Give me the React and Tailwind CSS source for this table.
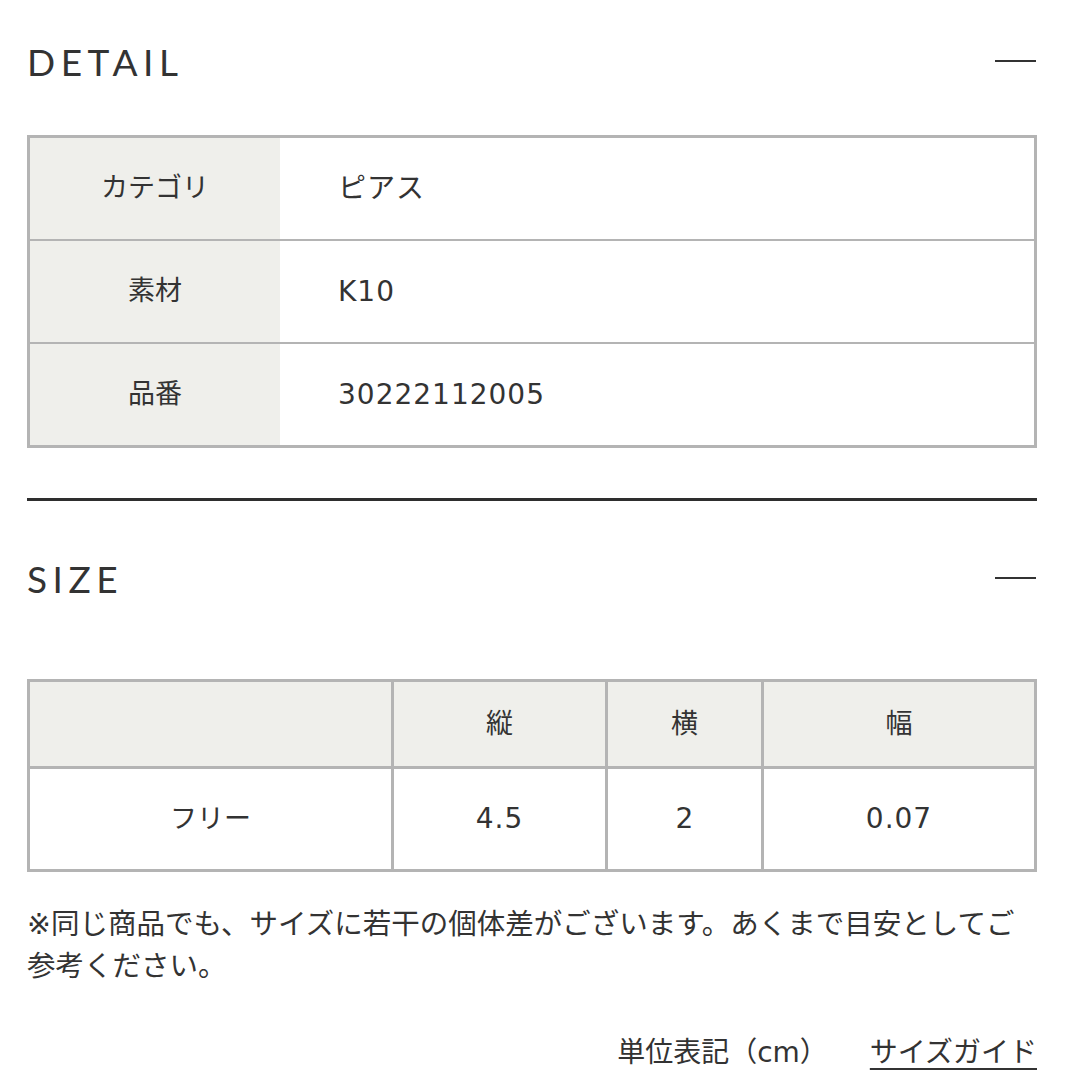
const jp = { fontFamily: '"DejaVu Sans", "Noto Sans CJK JP", sans-serif' };

const detailRows = [
    { label: 'カテゴリ', value: 'ピアス' },
    { label: '素材', value: 'K10' },
    { label: '品番', value: '30222112005' },
];

const SectionHead = ({ title, height }) => (
    <div className={`flex items-center justify-between ${height}`}>
        <h2
            className="text-[37px] tracking-[0.15em] text-[#333] leading-none"
            style={{ fontFamily: 'Lato, "Open Sans", sans-serif' }}
        >
            {title}
        </h2>
        <span className="block w-[41px] h-[2px] bg-[#333] mr-[1px]" />
    </div>
);

const App = () => {
    return (
        <div className="w-[1080px] bg-white text-[#333] pl-[27px] pr-[43px]" style={jp}>
            <SectionHead title="DETAIL" height="h-[122px]" />

            <div className="mt-[13px] border-[3px] border-[#b4b4b4]">
                {detailRows.map((row, i) => (
                    <div
                        key={row.label}
                        className={`flex ${i > 0 ? 'h-[103px] border-t-2 border-[#b4b4b4]' : 'h-[101px]'}`}
                    >
                        <div className="w-[250px] bg-[#efefeb] flex items-center justify-center text-[27px]">
                            {row.label}
                        </div>
                        <div className="flex-1 flex items-center pl-[58px] text-[28px] tracking-[1px]">
                            {row.value}
                        </div>
                    </div>
                ))}
            </div>

            <div className="mt-[50px] h-[3px] bg-[#2e2e2e]" />

            <SectionHead title="SIZE" height="h-[154px]" />

            <table className="mt-[24px] w-full border-collapse border-[3px] border-[#b4b4b4] text-[27px]">
                <thead>
                    <tr className="h-[87px] bg-[#efefeb]">
                        <th className="w-[364px] border-[3px] border-[#b4b4b4] font-normal"></th>
                        <th className="w-[214px] border-[3px] border-[#b4b4b4] font-normal">縦</th>
                        <th className="w-[156px] border-[3px] border-[#b4b4b4] font-normal">横</th>
                        <th className="border-[3px] border-[#b4b4b4] font-normal">幅</th>
                    </tr>
                </thead>
                <tbody>
                    <tr className="h-[103px] text-[28px]">
                        <td className="border-[3px] border-[#b4b4b4] text-center text-[27px]">フリー</td>
                        <td className="border-[3px] border-[#b4b4b4] text-center tracking-[1px]">4.5</td>
                        <td className="border-[3px] border-[#b4b4b4] text-center">2</td>
                        <td className="border-[3px] border-[#b4b4b4] text-center tracking-[1px]">0.07</td>
                    </tr>
                </tbody>
            </table>

            <p className="mt-[32px] text-[28.5px] leading-[42px]">
                ※同じ商品でも、サイズに若干の個体差がございます。あくまで目安としてご参考ください。
            </p>

            <div className="mt-[44px] flex justify-end items-center gap-[42px] h-[42px] text-[28px]">
                <span>単位表記（cm）</span>
                <a className="underline underline-offset-[6px] decoration-2 text-[#333]">サイズガイド</a>
            </div>
        </div>
    );
};

export default App;
